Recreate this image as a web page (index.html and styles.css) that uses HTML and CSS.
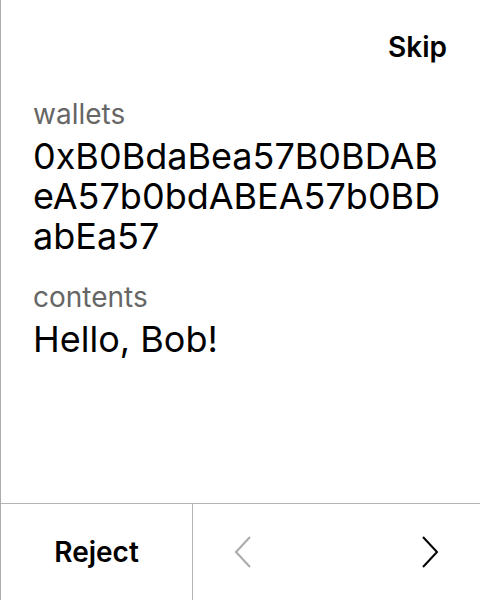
FILE: index.html
```html
<!DOCTYPE html>
<html>
<head>
<meta charset="utf-8">
<link rel="stylesheet" href="styles.css">
</head>
<body>
<div class="screen">
  <header class="top">
    <span class="skip">Skip</span>
  </header>
  <main class="content">
    <section class="field">
      <div class="label">wallets</div>
      <div class="value">0xB0BdaBea57B0BDABeA57b0bdABEA57b0BDabEa57</div>
    </section>
    <section class="field">
      <div class="label">contents</div>
      <div class="value">Hello, Bob!</div>
    </section>
  </main>
  <footer class="bar">
    <div class="reject">Reject</div>
    <div class="nav">
      <svg class="chev prev" width="18" height="32" viewBox="0 0 18 32"><path d="M16 1 L2 16 L16 31" fill="none" stroke="currentColor" stroke-width="2"/></svg>
      <svg class="chev next" width="18" height="32" viewBox="0 0 18 32"><path d="M2 1 L16 16 L2 31" fill="none" stroke="currentColor" stroke-width="2"/></svg>
    </div>
  </footer>
</div>
</body>
</html>
```
FILE: styles.css
```css
html, body {
  margin: 0;
  padding: 0;
  background: #fff;
}
body {
  font-family: Inter, "Noto Sans", sans-serif;
  color: #000;
}
.screen {
  width: 480px;
  height: 600px;
  box-sizing: border-box;
  border-left: 1px solid #ababab;
  display: flex;
  flex-direction: column;
}
.top {
  display: flex;
  justify-content: flex-end;
  padding: 30px 33px 0 0;
}
.skip {
  font-size: 28px;
  line-height: 34px;
  font-weight: 600;
}
.content {
  flex: 1;
  padding: 33px 32px 0 32px;
  display: flex;
  flex-direction: column;
  gap: 24px;
}
.label {
  font-size: 28px;
  line-height: 34px;
  color: #666;
}
.value {
  font-size: 36px;
  line-height: 40px;
  word-break: break-all;
  margin-top: 5px;
}
.bar {
  height: 96px;
  border-top: 1px solid #b3b3b3;
  display: flex;
}
.reject {
  width: 191px;
  border-right: 1px solid #b3b3b3;
  display: flex;
  align-items: center;
  justify-content: center;
  font-size: 28px;
  font-weight: 600;
}
.nav {
  flex: 1;
  display: flex;
  align-items: center;
  justify-content: space-between;
  padding: 0 41px;
}
.chev.prev { color: #aaa; }
.chev.next { color: #000; }
```
